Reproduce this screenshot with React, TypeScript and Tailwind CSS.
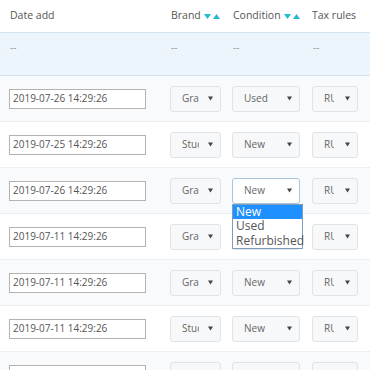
import React from 'react'

type Row = { date: string; brand: string; condition: string; tax: string; open?: boolean }

const rows: Row[] = [
  { date: '2019-07-26 14:29:26', brand: 'Graphic Corner', condition: 'Used', tax: 'RU Standard rate' },
  { date: '2019-07-25 14:29:26', brand: 'Studio Design', condition: 'New', tax: 'RU Standard rate' },
  { date: '2019-07-26 14:29:26', brand: 'Graphic Corner', condition: 'New', tax: 'RU Standard rate', open: true },
  { date: '2019-07-11 14:29:26', brand: 'Graphic Corner', condition: 'New', tax: 'RU Standard rate' },
  { date: '2019-07-11 14:29:26', brand: 'Graphic Corner', condition: 'New', tax: 'RU Standard rate' },
  { date: '2019-07-11 14:29:26', brand: 'Studio Design', condition: 'New', tax: 'RU Standard rate' },
  { date: '2019-07-11 14:29:26', brand: 'Studio Design', condition: 'New', tax: 'RU Standard rate' },
]

const cols = 'grid grid-cols-[161px_62px_80px_67px]'

function SortArrows() {
  return (
    <span className="ml-[3px] inline-flex items-center gap-[2px]">
      <svg width="7" height="5" viewBox="0 0 7 5"><path d="M0 0h7L3.5 5z" fill="#25b9d7" /></svg>
      <svg width="7" height="5" viewBox="0 0 7 5"><path d="M0 5h7L3.5 0z" fill="#25b9d7" /></svg>
    </span>
  )
}

function Caret() {
  return (
    <svg width="5" height="5" viewBox="0 0 5 5" className="shrink-0">
      <path d="M0 0.5h5L2.5 4.5z" fill="#444" />
    </svg>
  )
}

function FakeSelect({ value, width, clip, open }: { value: string; width: string; clip: string; open?: boolean }) {
  return (
    <div
      className={`${width} h-[26px] flex items-center justify-between pl-[11px] pr-[7px] rounded-[3px] border ${
        open ? 'bg-white border-[#a9c6de]' : 'bg-[#f6f8f9] border-[#dfe4e8]'
      }`}
    >
      <span className={`${clip} overflow-hidden whitespace-nowrap text-[#666]`}>{value}</span>
      <Caret />
    </div>
  )
}

export default function App() {
  return (
    <div className="w-[370px] h-[370px] overflow-hidden bg-white text-[10px] text-[#555]" style={{ fontFamily: '"Open Sans", sans-serif' }}>
      {/* header */}
      <div className={`${cols} h-[32px] items-center text-[10.5px] text-[#555]`}>
        <div className="pl-[10px]">Date add</div>
        <div className="pl-[10px] flex items-center">Brand<SortArrows /></div>
        <div className="pl-[10px] flex items-center">Condition<SortArrows /></div>
        <div className="pl-[9px]">Tax rules</div>
      </div>

      {/* filters */}
      <div className={`${cols} h-[44px] bg-[#ecf5fc] border-t border-b border-[#d3e3f0] pt-[7px] text-[#999]`}>
        <div className="pl-[10px]">--</div>
        <div className="pl-[10px]">--</div>
        <div className="pl-[10px]">--</div>
        <div className="pl-[10px]">--</div>
      </div>

      {rows.map((r, i) => (
        <div
          key={i}
          className={`${cols} h-[46px] items-center border-b border-[#eceff1] ${i % 2 === 0 ? 'bg-[#f8fafb]' : 'bg-white'}`}
        >
          <div className="pl-[9px]">
            <div className="w-[137px] h-[20px] border border-[#b3b3b3] bg-white flex items-center pl-[3px] text-[#555]">
              {r.date}
            </div>
          </div>
          <div className="pl-[9px]">
            <FakeSelect value={r.brand} width="w-[51px]" clip="w-[17px]" />
          </div>
          <div className="pl-[9px] relative">
            <FakeSelect value={r.condition} width="w-[68px]" clip="w-[40px]" open={r.open} />
            {r.open && (
              <div className="absolute left-[9px] top-[26px] z-10 w-[71px] bg-white border border-[#7f9db9] text-[12px] leading-[14.5px] text-[#555]">
                <div className="bg-[#1e90ff] text-white pl-[3px]">New</div>
                <div className="pl-[3px]">Used</div>
                <div className="pl-[3px]">Refurbished</div>
              </div>
            )}
          </div>
          <div className="pl-[9px]">
            <FakeSelect value={r.tax} width="w-[46px]" clip="w-[10px]" />
          </div>
        </div>
      ))}
    </div>
  )
}
